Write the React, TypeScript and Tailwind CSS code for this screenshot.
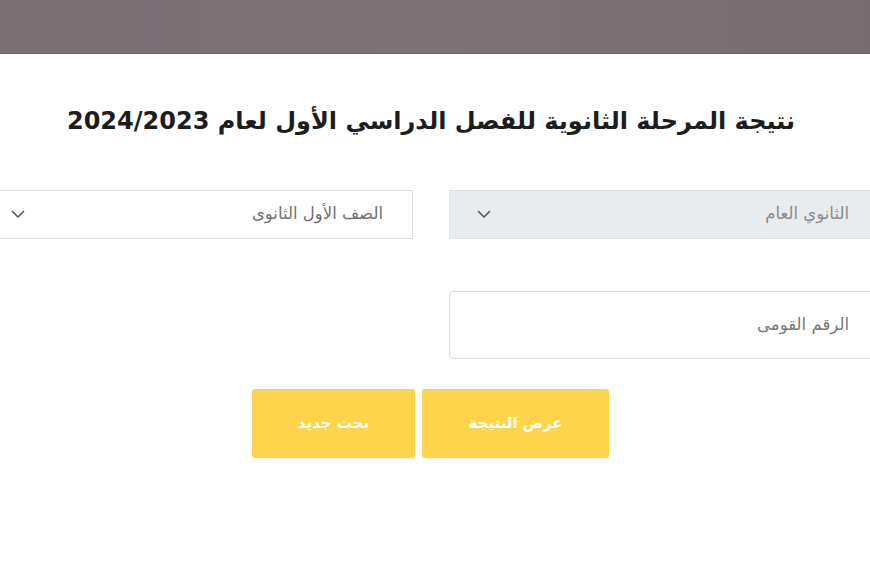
import React from "react";

function Chevron() {
  return (
    <svg width="14" height="9" viewBox="0 0 14 9" fill="none">
      <path d="M1.5 1.5 L7 7 L12.5 1.5" stroke="#555" strokeWidth="1.6" strokeLinecap="round" strokeLinejoin="round" />
    </svg>
  );
}

export default function App() {
  return (
    <div className="w-[870px] h-[580px] overflow-hidden bg-white relative" style={{ fontFamily: '"DejaVu Sans", "Noto Sans", sans-serif' }}>
      <div className="h-[54px] w-full border-b border-[#6d6368] bg-gradient-to-r from-[#7a6e73] via-[#7c7276] to-[#786c71]" />
      <h1 dir="rtl" className="mt-[47px] text-center text-[24px] font-bold text-[#1d1d1d] leading-[40px] pr-[8px]">
        نتيجة المرحلة الثانوية للفصل الدراسي الأول لعام 2024/2023
      </h1>
      <div dir="rtl" className="mt-[49px] w-[896px] -ml-[17px] flex gap-[36px]">
        <div className="w-[430px] h-[49px] bg-[#e9ecef] border border-[#dfe3e6] flex items-center justify-between pr-[29px] pl-[27px]">
          <span className="text-[16.5px] text-[#8a8a8a]">الثانوي العام</span>
          <Chevron />
        </div>
        <div className="w-[430px] h-[49px] bg-white border border-[#dcdcdc] flex items-center justify-between pr-[29px] pl-[27px]">
          <span className="text-[16.5px] text-[#6f6f6f]">الصف الأول الثانوى</span>
          <Chevron />
        </div>
      </div>
      <div dir="rtl" className="mt-[52px] w-[896px] -ml-[17px] flex">
        <div className="w-[430px] h-[68px] bg-white border border-[#dcdcdc] rounded-[4px] flex items-center pr-[29px]">
          <span className="text-[16.5px] text-[#777]">الرقم القومى</span>
        </div>
      </div>
      <div className="mt-[30px] flex gap-[7px] pl-[252px]">
        <div className="w-[163px] h-[69px] rounded-[3px] bg-[#fdd44b] flex items-center justify-center text-white text-[15px] font-bold" dir="rtl">
          بحث جديد
        </div>
        <div className="w-[187px] h-[69px] rounded-[3px] bg-[#fdd44b] flex items-center justify-center text-white text-[15px] font-bold" dir="rtl">
          عرض النتيجة
        </div>
      </div>
    </div>
  );
}
